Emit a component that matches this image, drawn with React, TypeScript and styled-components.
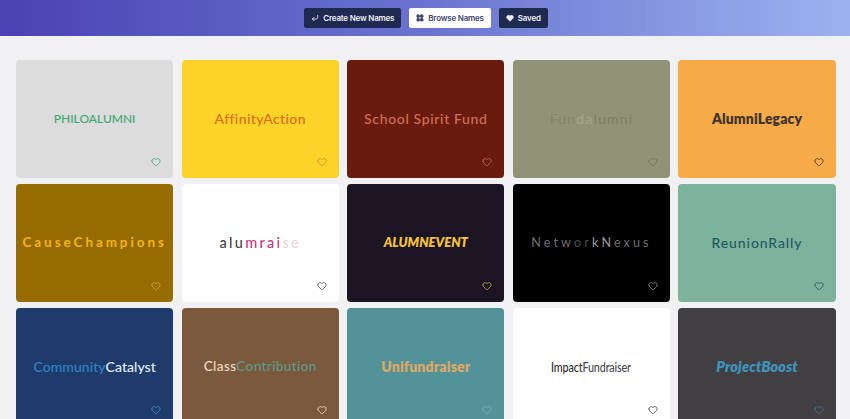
import React from 'react';
import styled, { createGlobalStyle } from 'styled-components';
import { CornerDownLeft, Heart, LayoutGrid } from 'lucide-react';

interface Segment {
    text: string;
    color: string;
}

interface NameItem {
    bg: string;
    heart: string;
    size: number;
    weight: number;
    spacing?: number;
    italic?: boolean;
    squeeze?: number;
    segments: Segment[];
}

const names: NameItem[] = [
    { bg: '#dcdcdc', heart: '#3fa878', size: 12, weight: 500, spacing: 0, segments: [{ text: 'PHILOALUMNI', color: '#3fa66f' }] },
    { bg: '#ffd428', heart: '#d9822b', size: 14, weight: 500, spacing: 0.4, segments: [{ text: 'AffinityAction', color: '#dc6a1c' }] },
    { bg: '#691b0d', heart: '#d0705c', size: 14, weight: 500, spacing: 0.65, segments: [{ text: 'School Spirit Fund', color: '#d0705c' }] },
    { bg: '#909375', heart: '#6e705c', size: 14, weight: 400, spacing: 1.2, segments: [{ text: 'Fun', color: '#83866b' }, { text: 'da', color: '#a3a68c' }, { text: 'lumni', color: '#7a7d64' }] },
    { bg: '#f6aa48', heart: '#4a3a2a', size: 14, weight: 800, spacing: 0.1, segments: [{ text: 'AlumniLegacy', color: '#3d3431' }] },
    { bg: '#966b00', heart: '#d9a227', size: 13.5, weight: 700, spacing: 2.9, segments: [{ text: 'CauseChampions', color: '#f4b41a' }] },
    { bg: '#ffffff', heart: '#5a5a5a', size: 14.5, weight: 500, spacing: 2.3, segments: [{ text: 'alu', color: '#45424a' }, { text: 'mrai', color: '#c4397e' }, { text: 'se', color: '#e8d5e0' }] },
    { bg: '#1b1523', heart: '#c9a24a', size: 13, weight: 800, spacing: 0, italic: true, segments: [{ text: 'ALUMNEVENT', color: '#f4c13c' }] },
    { bg: '#000000', heart: '#8a8a8a', size: 12.5, weight: 400, spacing: 3.15, segments: [{ text: 'Netw', color: '#6f6f6f' }, { text: 'or', color: '#4c4c4c' }, { text: 'kN', color: '#9a9a9a' }, { text: 'exus', color: '#6f6f6f' }] },
    { bg: '#7db39c', heart: '#1f5a5a', size: 14, weight: 500, spacing: 0.9, segments: [{ text: 'ReunionRally', color: '#1d5a5f' }] },
    { bg: '#1f3b6c', heart: '#3d8bc9', size: 14, weight: 500, spacing: 0.05, segments: [{ text: 'Community', color: '#3283c2' }, { text: 'Catalyst', color: '#e4edf2' }] },
    { bg: '#7b593d', heart: '#f0e0d0', size: 13.5, weight: 500, spacing: 0.4, segments: [{ text: 'Class', color: '#f3dcc4' }, { text: 'Contribution', color: '#5f9a8d' }] },
    { bg: '#519399', heart: '#7fb0ae', size: 14, weight: 800, spacing: 0.2, segments: [{ text: 'Unifundraiser', color: '#dfa865' }] },
    { bg: '#ffffff', heart: '#4a4a4a', size: 14, weight: 500, spacing: -0.2, squeeze: 0.77, segments: [{ text: 'Impact', color: '#2f2f33' }, { text: 'Fundraiser', color: '#4b4b50' }] },
    { bg: '#423f42', heart: '#3f7f9f', size: 14.5, weight: 800, spacing: 0.15, italic: true, segments: [{ text: 'ProjectBoost', color: '#3f94bd' }] },
];

const App: React.FC = () => {
    return (
        <>
            <GlobalStyle />
            <TopBar>
                <NavButton>
                    <CornerDownLeft size={8} strokeWidth={2.5} />
                    Create New Names
                </NavButton>
                <NavButton $active>
                    <LayoutGrid size={8} strokeWidth={3} fill="currentColor" />
                    Browse Names
                </NavButton>
                <NavButton>
                    <Heart size={8} fill="currentColor" />
                    Saved
                </NavButton>
            </TopBar>
            <NameGrid>
                {names.map((item) => (
                    <NameCard key={item.segments.map((s) => s.text).join('')} $bg={item.bg}>
                        <NameText
                            $size={item.size}
                            $weight={item.weight}
                            $spacing={item.spacing ?? 0}
                            $italic={!!item.italic}
                            $squeeze={item.squeeze ?? 1}
                        >
                            {item.segments.map((s) => (
                                <Part key={s.text} $color={s.color}>{s.text}</Part>
                            ))}
                        </NameText>
                        <SaveIcon $color={item.heart}>
                            <Heart size={10} strokeWidth={2} />
                        </SaveIcon>
                    </NameCard>
                ))}
            </NameGrid>
        </>
    );
};

export default App;

const GlobalStyle = createGlobalStyle`
    html, body {
        margin: 0;
        height: 100%;
        overflow: hidden;
        background: #f1f1f3;
        font-family: Inter, "Liberation Sans", sans-serif;
    }
`;

const TopBar = styled.header`
    height: 36px;
    display: flex;
    align-items: center;
    justify-content: center;
    gap: 8px;
    padding-left: 2px;
    box-sizing: border-box;
    background: linear-gradient(90deg, #4a42b4 0%, #6a74cf 50%, #9db2f0 100%);
`;

const NavButton = styled.button<{ $active?: boolean }>`
    height: 20px;
    display: flex;
    align-items: center;
    gap: 4px;
    padding: 0 7px;
    border: none;
    border-radius: 2px;
    font-family: inherit;
    font-size: 8px;
    font-weight: 600;
    letter-spacing: -0.2px;
    background: ${({ $active }) => ($active ? '#ffffff' : '#1f2a50')};
    color: ${({ $active }) => ($active ? '#40456a' : '#eef0f6')};
`;

const NameGrid = styled.main`
    display: grid;
    grid-template-columns: repeat(5, 157.3px);
    grid-auto-rows: 118px;
    column-gap: 8.3px;
    row-gap: 6px;
    padding: 24px 0 0 16px;
`;

const NameCard = styled.article<{ $bg: string }>`
    position: relative;
    display: flex;
    align-items: center;
    justify-content: center;
    padding-bottom: 2px;
    box-sizing: border-box;
    border-radius: 4px;
    background: ${({ $bg }) => $bg};
`;

const NameText = styled.div<{ $size: number; $weight: number; $spacing: number; $italic: boolean; $squeeze: number }>`
    white-space: nowrap;
    font-family: Lato, "Liberation Sans", sans-serif;
    font-size: ${({ $size }) => $size}px;
    font-weight: ${({ $weight }) => $weight};
    font-style: ${({ $italic }) => ($italic ? 'italic' : 'normal')};
    letter-spacing: ${({ $spacing }) => $spacing}px;
    transform: scaleX(${({ $squeeze }) => $squeeze});
`;

const Part = styled.span<{ $color: string }>`
    color: ${({ $color }) => $color};
`;

const SaveIcon = styled.span<{ $color: string }>`
    position: absolute;
    right: 12px;
    bottom: 11px;
    display: flex;
    color: ${({ $color }) => $color};
`;
